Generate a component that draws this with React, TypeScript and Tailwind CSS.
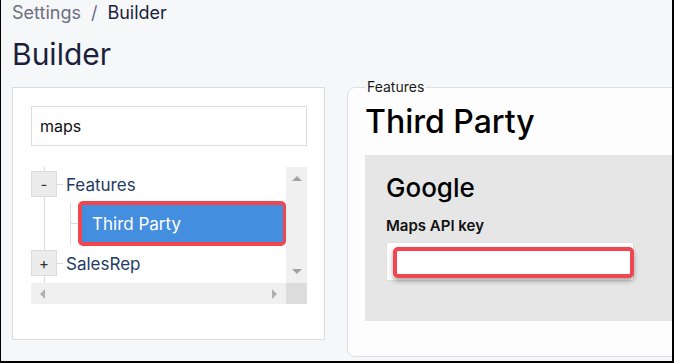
import React, { useState } from "react";

const font = { fontFamily: "Inter, 'Noto Sans', sans-serif" };

function TreeToggle({ sign }: { sign: string }) {
  return (
    <div className="w-[26px] h-[26px] shrink-0 flex items-center justify-center bg-[#ececec] border border-[#dcdcdc] text-[15px] leading-none text-[#333]">
      {sign}
    </div>
  );
}

export default function App() {
  const [search, setSearch] = useState("maps");
  const [apiKey, setApiKey] = useState("");

  return (
    <div
      style={font}
      className="w-[674px] h-[363px] overflow-hidden bg-[#f6f7f9] border-l border-r-2 border-b-2 border-black px-[11px] pt-[1px]"
    >
      <div className="text-[18px] leading-6 flex gap-[10px]">
        <span className="text-[#6b6f80]">Settings</span>
        <span className="text-[#6b6f80]">/</span>
        <span className="text-[#1b1f3b]">Builder</span>
      </div>
      <h1 className="mt-[9px] text-[30px] leading-10 text-[#1b1f3b]">Builder</h1>

      <div className="flex items-start gap-[22px] mt-[3px]">
        {/* left: tree panel */}
        <div className="mt-[10px] w-[313px] h-[253px] shrink-0 bg-white border border-[#dcdcdc] px-[18px] pt-[18px]">
          <input
            value={search}
            onChange={(e) => setSearch(e.target.value)}
            className="w-[276px] h-[40px] border border-[#dcdcdc] px-[8px] text-[16px] text-[#111] outline-none"
          />

          <div className="mt-[21px] w-[276px] h-[137px] grid grid-cols-[255px_21px] grid-rows-[116px_21px]">
            <div className="relative overflow-hidden">
              <div className="absolute left-[13px] top-0 bottom-0 w-px bg-[#dcdcdc]" />
              <div className="relative pt-[4px] text-[17px] text-[#1f3b63]">
                <div className="flex items-center h-[26px]">
                  <TreeToggle sign="-" />
                  <div className="w-[6px] h-px bg-[#dcdcdc]" />
                  <span className="ml-[3px] pt-[3px]">Features</span>
                </div>
                <div className="flex items-center mt-[4px] ml-[39px] relative">
                  <div className="absolute left-0 top-[2px] bottom-[1px] w-px bg-[#dcdcdc]" />
                  <div className="w-[8px] h-px bg-[#dcdcdc]" />
                  <div className="w-[208px] border-[4px] border-r-[3px] border-[#f2464e] rounded-[5px]">
                    <div className="bg-[#448ee0] h-[37px] flex items-center pl-[10px] pt-[2px] text-white">
                      Third Party
                    </div>
                  </div>
                </div>
                <div className="flex items-center h-[26px] mt-[4px]">
                  <TreeToggle sign="+" />
                  <div className="w-[6px] h-px bg-[#dcdcdc]" />
                  <span className="ml-[3px] pt-[3px]">SalesRep</span>
                </div>
              </div>
            </div>

            {/* vertical scrollbar */}
            <div className="bg-[#f0f0f0] flex flex-col items-center justify-between py-[9px]">
              <div className="w-0 h-0 border-l-[5px] border-r-[5px] border-b-[5px] border-l-transparent border-r-transparent border-b-[#a3a3a3]" />
              <div className="w-0 h-0 border-l-[5px] border-r-[5px] border-t-[5px] border-l-transparent border-r-transparent border-t-[#a3a3a3]" />
            </div>

            {/* horizontal scrollbar */}
            <div className="bg-[#f0f0f0] flex items-center justify-between px-[9px]">
              <div className="w-0 h-0 border-t-[5px] border-b-[5px] border-r-[5px] border-t-transparent border-b-transparent border-r-[#b0b0b0]" />
              <div className="w-0 h-0 border-t-[5px] border-b-[5px] border-l-[5px] border-t-transparent border-b-transparent border-l-[#b0b0b0]" />
            </div>
            <div className="bg-[#dcdcdc]" />
          </div>
        </div>

        {/* right: settings panel */}
        <fieldset className="w-[360px] h-[280px] shrink-0 border border-[#e0e0e4] rounded-[8px] bg-[#fdfdfd] pl-[17px]">
          <legend className="ml-[1px] px-[1px] text-[14px] leading-5 text-[#1b1b1b]">Features</legend>
          <h2 className="mt-[7px] text-[32px] leading-9 font-medium text-black">Third Party</h2>

          <div className="mt-[15px] h-[166px] bg-[#e6e6e6] px-[21px] pt-[17px]">
            <h3 className="text-[26px] leading-8 font-medium text-black">Google</h3>
            <label className="block mt-[12px] text-[15px] leading-5 font-semibold text-[#111]">
              Maps API key
            </label>
            <div className="mt-[6px] w-[248px] h-[39px] bg-white border border-[#e0e0e0] pl-[6px] pt-[4px]">
              <input
                value={apiKey}
                onChange={(e) => setApiKey(e.target.value)}
                className="w-[241px] h-[31px] border-[4px] border-[#f2464e] rounded-[5px] bg-white shadow-[0_3px_5px_rgba(0,0,0,0.35)] outline-none"
              />
            </div>
          </div>
        </fieldset>
      </div>
    </div>
  );
}
